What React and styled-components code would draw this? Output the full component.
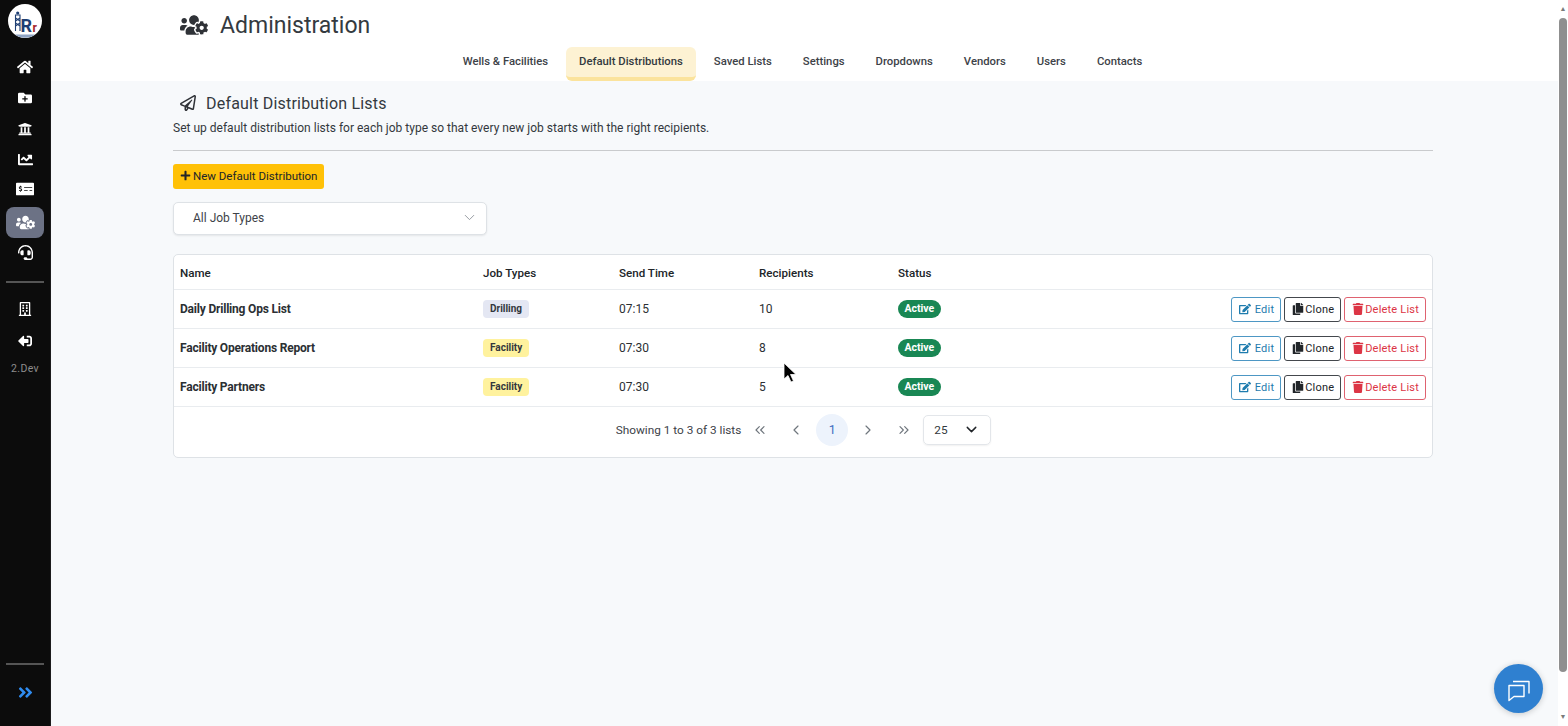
import React from "react";
import styled, { createGlobalStyle } from "styled-components";
import {
  FaHome, FaFolderPlus, FaUniversity, FaChartLine, FaMoneyCheckAlt, FaUsersCog, FaHeadset,
  FaRegBuilding, FaSignOutAlt, FaAngleDoubleRight, FaRegPaperPlane, FaPlus, FaEdit, FaCopy, FaTrash,
} from "react-icons/fa";
import { ChevronDown, ChevronLeft, ChevronRight, ChevronsLeft, ChevronsRight } from "lucide-react";

const GlobalStyle = createGlobalStyle`
  html, body { margin: 0; height: 100%; overflow: hidden; }
  body { font-family: Roboto, "Liberation Sans", sans-serif; background: #f7f9fb; color: #212529; }
  * { box-sizing: border-box; }
`;

const Page = styled.div`
  display: flex;
  height: 726px;
  width: 1568px;
  overflow: hidden;
`;

const Sidebar = styled.nav`
  width: 51px;
  flex: none;
  background: #0c0c0c;
  border-right: 1px solid #1c1c1c;
  display: flex;
  flex-direction: column;
  align-items: center;
  padding-top: 4px;
`;

const Logo = styled.svg`
  width: 34px;
  height: 34px;
  margin-bottom: 13px;
`;

const NavItem = styled.a`
  width: 38px;
  height: ${(p) => p.$h || 31}px;
  margin-top: ${(p) => p.$top || 0}px;
  flex: none;
  display: flex;
  align-items: center;
  justify-content: center;
  color: #fff;
  font-size: 16px;
  border-radius: 8px;
  background: ${(p) => (p.$active ? "#6c7285" : "transparent")};
`;

const NavRule = styled.hr`
  width: 38px;
  height: 2px;
  flex: none;
  border: 0;
  background: #555;
  margin: ${(p) => p.$margin};
`;

const Version = styled.div`
  color: #8d8d8d;
  font-size: 10.5px;
  letter-spacing: 0.4px;
  margin-top: 11px;
`;

const SidebarSpacer = styled.div`
  flex: 1;
`;

const Expand = styled.div`
  color: #2f8cf0;
  font-size: 17px;
  height: 21px;
  margin: 19px 0 21px;
  display: flex;
`;

const Main = styled.main`
  flex: 1;
  min-width: 0;
  display: flex;
  flex-direction: column;
`;

const Header = styled.header`
  background: #fff;
  height: 81px;
  padding-left: 122px;
`;

const TitleRow = styled.div`
  height: 47px;
  display: flex;
  align-items: center;
  padding: 3px 0 0 7px;
  gap: 12px;
  color: #343a40;
  font-size: 23px;
  svg { font-size: 28px; color: #2f3237; }
`;

const Tabs = styled.div`
  width: 1259px;
  display: flex;
  justify-content: center;
  gap: 5px;
`;

const Tab = styled.a`
  height: 34px;
  padding: 0 13px 6px;
  display: flex;
  align-items: center;
  font-size: 11.3px;
  font-weight: 500;
  color: #3d4248;
  border-radius: 6px;
  ${(p) => p.$active && `
    background: #fdf2d3;
    border-bottom: 4px solid #fbe39c;
    padding-bottom: 2px;
    color: #343a40;
  `}
`;

const Content = styled.section`
  width: 1260px;
  margin-left: 122px;
`;

const SectionTitle = styled.h2`
  margin: 0;
  height: 40px;
  padding: 4px 0 0 7px;
  display: flex;
  align-items: center;
  gap: 10px;
  font-size: 16px;
  font-weight: 400;
  letter-spacing: 0.2px;
  color: #343a40;
  svg { font-size: 16px; color: #2f3237; }
`;

const Lead = styled.p`
  margin: 0;
  font-size: 12px;
  line-height: 15px;
  letter-spacing: 0.01px;
  color: #33383d;
`;

const Divider = styled.hr`
  border: 0;
  height: 1px;
  background: #c9cbcd;
  margin: 14px 0 13px;
`;

const PrimaryButton = styled.button`
  height: 25px;
  padding: 0 7px 2px;
  display: flex;
  align-items: center;
  gap: 2px;
  border: 0;
  border-radius: 3px;
  background: #ffc107;
  color: #212529;
  font: 400 11.5px Roboto, sans-serif;
  svg { font-size: 11px; }
`;

const Select = styled.div`
  width: 314px;
  height: 33px;
  margin: 13px 0 19px;
  padding: 0 8px 2px 19px;
  display: flex;
  align-items: center;
  justify-content: space-between;
  background: #fff;
  border: 1px solid #dee2e6;
  border-radius: 5px;
  box-shadow: 0 1px 2px rgba(0, 0, 0, 0.08);
  font-size: 12px;
  color: #3d4248;
  svg { color: #8a9097; }
`;

const Card = styled.div`
  background: #fff;
  border: 1px solid #dee2e6;
  border-radius: 5px;
  height: 204px;
`;

const Row = styled.div`
  display: grid;
  grid-template-columns: 303px 136px 140px 139px 1fr;
  align-items: center;
  height: ${(p) => p.$h || 39}px;
  padding: ${(p) => (p.$h ? "2px" : "0")} 6px 0;
  border-bottom: 1px solid #e9ecef;
  font-size: 12px;
  color: #2b2f33;
`;

const HeadCell = styled.div`
  font-weight: 500;
  font-size: 11.6px;
  color: #212529;
`;

const NameCell = styled.div`
  font-weight: 700;
  font-size: 12px;
  letter-spacing: -0.2px;
`;

const Pill = styled.span`
  display: inline-block;
  padding: 0 7px;
  height: 18px;
  line-height: 17px;
  font-size: 10px;
  font-weight: 700;
  border-radius: 4px;
  color: #33373d;
  background: ${(p) => (p.$kind === "Facility" ? "#fff29e" : "#e4e7f3")};
`;

const StatusPill = styled.span`
  display: inline-block;
  padding: 0 6.5px;
  height: 18px;
  line-height: 17px;
  font-size: 10.5px;
  font-weight: 700;
  border-radius: 9px;
  color: #fff;
  background: #198754;
  margin-right: auto;
`;

const Actions = styled.div`
  display: flex;
  justify-content: flex-end;
  align-items: center;
  gap: 3px;
`;

const ActionButton = styled.button`
  height: 25px;
  padding: 0 6px 0 7px;
  display: flex;
  align-items: center;
  gap: ${(p) => p.$gap}px;
  background: #fff;
  border: 1px solid ${(p) => p.$border};
  border-radius: 3px;
  color: ${(p) => p.$color};
  font: 400 11px Roboto, sans-serif;
  letter-spacing: 0.2px;
  svg { font-size: 12px; }
`;

const Pager = styled.div`
  height: 50px;
  padding: 0 0 5px 1px;
  display: flex;
  align-items: center;
  justify-content: center;
  font-size: 11.8px;
  color: #3d4248;
`;

const PageText = styled.span`
  margin-right: 1px;
`;

const PageButton = styled.span`
  width: 36px;
  height: 32px;
  display: flex;
  align-items: center;
  justify-content: center;
  color: ${(p) => (p.$current ? "#3f6cc0" : "#6f767d")};
  font-size: 12.5px;
  ${(p) => p.$current && `
    background: #edf3fc;
    border-radius: 50%;
    width: 32px;
    margin: 0 2px;
  `}
`;

const PageSize = styled.div`
  width: 68px;
  height: 30px;
  margin-left: 1px;
  padding: 0 10px;
  display: flex;
  align-items: center;
  justify-content: space-between;
  border: 1px solid #e3e6ea;
  border-radius: 5px;
  box-shadow: 0 1px 2px rgba(0, 0, 0, 0.06);
  color: #33383d;
  svg { color: #212529; }
`;

const Scrollbar = styled.div`
  width: 10px;
  flex: none;
  background: #fff;
  display: flex;
  flex-direction: column;
  align-items: center;
`;

const ScrollArrow = styled.div`
  height: 18px;
  flex: none;
  display: flex;
  align-items: center;
  justify-content: center;
  color: #7a7a7a;
  font-size: 7px;
  line-height: 1;
`;

const ScrollThumb = styled.div`
  width: 8px;
  height: 654px;
  background: #8f8f8f;
  border-radius: 4px;
`;

const ScrollSpace = styled.div`
  flex: 1;
`;

const ChatButton = styled.button`
  position: fixed;
  left: 1494px;
  top: 664px;
  width: 49px;
  height: 49px;
  border: 0;
  border-radius: 50%;
  background: #2f80d0;
  box-shadow: 0 1px 6px rgba(0, 0, 0, 0.2);
  display: flex;
  align-items: center;
  justify-content: center;
`;

const Cursor = styled.svg`
  position: fixed;
  left: 783px;
  top: 362px;
  width: 13px;
  height: 21px;
`;

const FlippedIcon = styled(FaSignOutAlt)`
  transform: scaleX(-1);
`;

const distributions = [
  { name: "Daily Drilling Ops List", type: "Drilling", time: "07:15", count: 10 },
  { name: "Facility Operations Report", type: "Facility", time: "07:30", count: 8 },
  { name: "Facility Partners", type: "Facility", time: "07:30", count: 5 },
];

const tabs = ["Wells & Facilities", "Default Distributions", "Saved Lists", "Settings", "Dropdowns", "Vendors", "Users", "Contacts"];

export default function App() {
  return (
    <Page>
      <GlobalStyle />
      <Sidebar>
        <Logo viewBox="0 0 34 34">
          <circle cx="17" cy="17" r="17" fill="#fff" />
          <path d="M7 30.5a17 17 0 0 0 20 0z" fill="#8fa4c4" />
          <path d="M7.5 27V11h4.5v16M7.5 14l4.5 3M12 14l-4.5 3M7.5 19l4.5 3M12 19l-4.5 3" stroke="#1f3f73" strokeWidth="1.1" fill="none" />
          <circle cx="9.7" cy="9" r="1.6" fill="#1f3f73" />
          <text x="12.5" y="28" fontFamily="Roboto, sans-serif" fontWeight="700" fontSize="18" fill="#1f3f73">R</text>
          <text x="24.5" y="28" fontFamily="Roboto, sans-serif" fontWeight="700" fontSize="12" fill="#a3262b">r</text>
        </Logo>
        <NavItem><FaHome /></NavItem>
        <NavItem><FaFolderPlus size={14} /></NavItem>
        <NavItem><FaUniversity size={14} /></NavItem>
        <NavItem $h={30}><FaChartLine size={15} /></NavItem>
        <NavItem $h={30}><FaMoneyCheckAlt size={18} /></NavItem>
        <NavItem $active $top={3}><FaUsersCog size={19} /></NavItem>
        <NavItem $h={29}><FaHeadset size={15} /></NavItem>
        <NavRule $margin="14px 0 0" />
        <NavItem $h={44} $top={4}><FaRegBuilding size={14} /></NavItem>
        <NavItem $h={20}><FlippedIcon size={14} /></NavItem>
        <Version>2.Dev</Version>
        <SidebarSpacer />
        <NavRule $margin="0" />
        <Expand><FaAngleDoubleRight /></Expand>
      </Sidebar>
      <Main>
        <Header>
          <TitleRow>
            <FaUsersCog />
            Administration
          </TitleRow>
          <Tabs>
            {tabs.map((t) => (
              <Tab key={t} $active={t === "Default Distributions"}>{t}</Tab>
            ))}
          </Tabs>
        </Header>
        <Content>
          <SectionTitle>
            <FaRegPaperPlane />
            Default Distribution Lists
          </SectionTitle>
          <Lead>Set up default distribution lists for each job type so that every new job starts with the right recipients.</Lead>
          <Divider />
          <PrimaryButton><FaPlus />New Default Distribution</PrimaryButton>
          <Select>
            All Job Types
            <ChevronDown size={17} strokeWidth={1.25} />
          </Select>
          <Card>
            <Row $h={35}>
              <HeadCell>Name</HeadCell>
              <HeadCell>Job Types</HeadCell>
              <HeadCell>Send Time</HeadCell>
              <HeadCell>Recipients</HeadCell>
              <HeadCell>Status</HeadCell>
            </Row>
            {distributions.map((d) => (
              <Row key={d.name}>
                <NameCell>{d.name}</NameCell>
                <div><Pill $kind={d.type}>{d.type}</Pill></div>
                <div>{d.time}</div>
                <div>{d.count}</div>
                <Actions>
                  <StatusPill>Active</StatusPill>
                  <ActionButton $border="#4d97c4" $color="#1f7cae" $gap={4}><FaEdit />Edit</ActionButton>
                  <ActionButton $border="#44484d" $color="#212529" $gap={1}><FaCopy />Clone</ActionButton>
                  <ActionButton $border="#df6270" $color="#dc3545" $gap={1}><FaTrash />Delete List</ActionButton>
                </Actions>
              </Row>
            ))}
            <Pager>
              <PageText>Showing 1 to 3 of 3 lists</PageText>
              <PageButton><ChevronsLeft size={16} strokeWidth={1.75} /></PageButton>
              <PageButton><ChevronLeft size={16} strokeWidth={1.75} /></PageButton>
              <PageButton $current>1</PageButton>
              <PageButton><ChevronRight size={16} strokeWidth={1.75} /></PageButton>
              <PageButton><ChevronsRight size={16} strokeWidth={1.75} /></PageButton>
              <PageSize>25<ChevronDown size={17} strokeWidth={2} /></PageSize>
            </Pager>
          </Card>
        </Content>
      </Main>
      <Scrollbar>
        <ScrollArrow>▲</ScrollArrow>
        <ScrollThumb />
        <ScrollSpace />
        <ScrollArrow>▼</ScrollArrow>
      </Scrollbar>
      <ChatButton>
        <svg width="26" height="26" viewBox="0 0 26 26" fill="none" stroke="#fff" strokeWidth="1.4" strokeLinejoin="round">
          <path d="M3 9.5h15v11H8l-5 4z" />
          <path d="M7 5.5h16v12" />
        </svg>
      </ChatButton>
      <Cursor viewBox="0 0 13 21">
        <path d="M1 1v16l4-3.5 3 6.5 2.5-1-3-6.5H13z" fill="#000" stroke="#fff" strokeWidth="0.8" />
      </Cursor>
    </Page>
  );
}
